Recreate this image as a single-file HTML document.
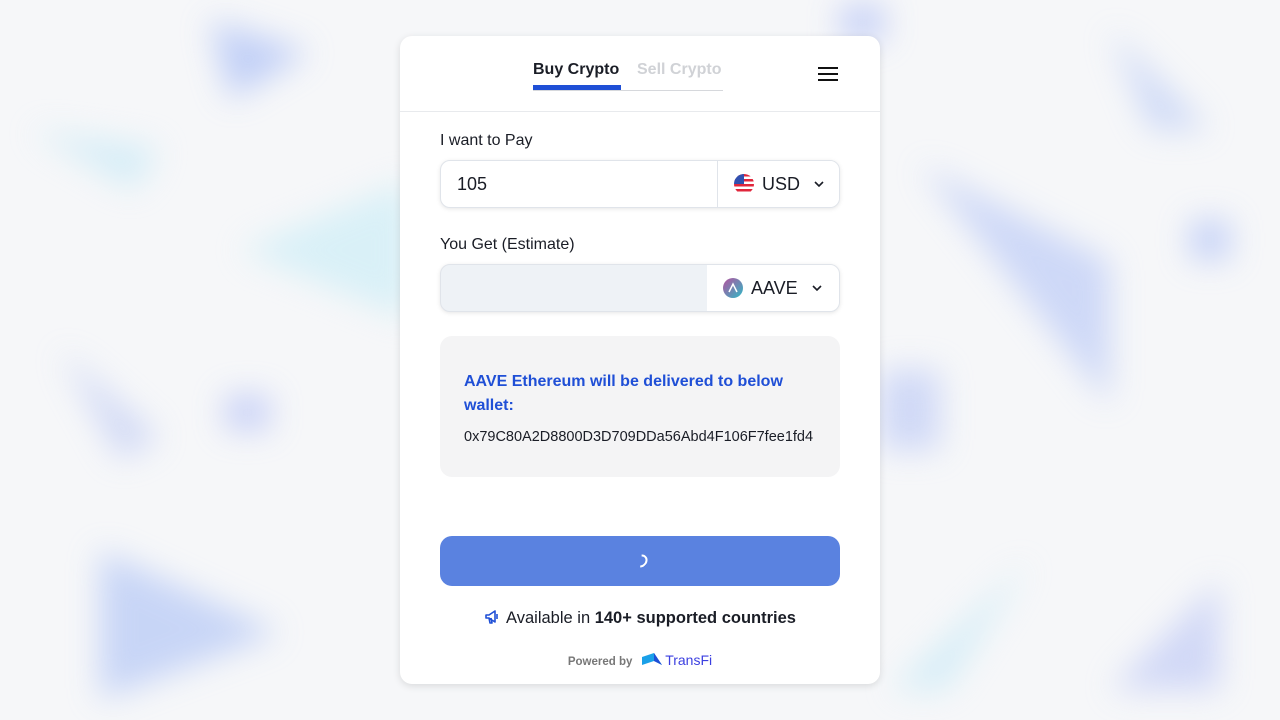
<!DOCTYPE html>
<html><head><style>
*{box-sizing:border-box;margin:0;padding:0}
body{width:1280px;height:720px;overflow:hidden;background:#f6f7f9;font-family:"Liberation Sans",sans-serif;position:relative}
.b{position:absolute;filter:blur(16px);opacity:.6}
.b>div{width:100%;height:100%}
.card{position:absolute;left:400px;top:36px;width:480px;height:648px;background:#fff;border-radius:12px;box-shadow:0 2px 8px rgba(0,0,0,.12)}
.hdr{height:76px;border-bottom:1px solid #e8eaed;position:relative}
.tab{position:absolute;top:25px;font-size:16px;font-weight:bold}
.lbl{position:absolute;left:40px;font-size:16px;color:#1a1d26}
.box{position:absolute;left:40px;width:400px;height:48px;border-radius:10px;border:1px solid #e0e4ea;box-shadow:0 1px 4px rgba(0,0,0,.1);overflow:hidden}
.sel{position:absolute;right:0;top:0;height:100%;background:#fff;display:flex;align-items:center;font-size:18px;color:#1a1d26}
</style></head><body>
<div class="b" style="left:210px;top:20px;width:100px;height:80px"><div style="background:#9fb6f5;clip-path:polygon(0 0,100% 40%,20% 100%)"></div></div>
<div class="b" style="left:30px;top:130px;width:130px;height:60px"><div style="background:#bfe6f5;clip-path:polygon(0 0,100% 30%,80% 100%)"></div></div>
<div class="b" style="left:240px;top:180px;width:170px;height:140px"><div style="background:#c6ecf6;clip-path:polygon(100% 0,0 50%,100% 100%)"></div></div>
<div class="b" style="left:60px;top:350px;width:100px;height:110px"><div style="background:#b9c6f3;clip-path:polygon(0 0,100% 80%,60% 100%)"></div></div>
<div class="b" style="left:225px;top:395px;width:45px;height:35px"><div style="background:#a9b7f5"></div></div>
<div class="b" style="left:100px;top:550px;width:180px;height:150px"><div style="background:#a9bff5;clip-path:polygon(0 0,100% 55%,0 100%)"></div></div>
<div class="b" style="left:920px;top:165px;width:190px;height:240px"><div style="background:#b3c4f6;clip-path:polygon(0 0,100% 40%,100% 100%)"></div></div>
<div class="b" style="left:880px;top:370px;width:60px;height:80px"><div style="background:#b7c5f5"></div></div>
<div class="b" style="left:1110px;top:30px;width:100px;height:100px"><div style="background:#b6c8f5;clip-path:polygon(0 0,100% 100%,40% 100%)"></div></div>
<div class="b" style="left:1190px;top:220px;width:40px;height:40px"><div style="background:#a5b9f5"></div></div>
<div class="b" style="left:890px;top:560px;width:140px;height:130px"><div style="background:#c1e7f6;clip-path:polygon(100% 0,0 100%,40% 100%)"></div></div>
<div class="b" style="left:1110px;top:580px;width:110px;height:110px"><div style="background:#b9c4f5;clip-path:polygon(100% 0,0 100%,100% 100%)"></div></div>
<div class="b" style="left:840px;top:5px;width:45px;height:35px"><div style="background:#a6b7f5"></div></div>
<div class="card">
<div class="hdr">
<div class="tab" style="left:133px;color:#1a1d26">Buy Crypto</div>
<div class="tab" style="left:237px;color:#d0d2d6">Sell Crypto</div>
<div style="position:absolute;left:133px;top:54px;width:190px;height:1px;background:#d6d8dc"></div>
<div style="position:absolute;left:133px;top:49px;width:88px;height:5px;background:#1f4fd6"></div>
<div style="position:absolute;left:418px;top:31px;width:20px;height:2px;background:#111;box-shadow:0 6px 0 #111,0 12px 0 #111"></div>
</div>
<div class="lbl" style="top:96px">I want to Pay</div>
<div class="box" style="top:124px;background:#fff">
<div style="position:absolute;left:16px;top:13px;font-size:18px;color:#1a1d26">105</div>
<div class="sel" style="width:122px;border-left:1px solid #e0e4ea;padding-left:16px">
<svg width="20" height="20" viewBox="0 0 20 20"><clipPath id="c"><circle cx="10" cy="10" r="10"/></clipPath><g clip-path="url(#c)"><rect width="20" height="20" fill="#fff"/><rect y="0" width="20" height="2.5" fill="#e0263b"/><rect y="5" width="20" height="2.5" fill="#e0263b"/><rect y="10" width="20" height="2.5" fill="#e0263b"/><rect y="15" width="20" height="2.5" fill="#e0263b"/><rect width="10" height="10" fill="#3050b0"/></g></svg>
<span style="margin-left:8px">USD</span><svg style="margin-left:14px" width="10" height="6" viewBox="0 0 10 6"><path d="M1 1l4 4 4-4" stroke="#1a1d26" stroke-width="1.6" fill="none"/></svg></div>
</div>
<div class="lbl" style="top:200px">You Get (Estimate)</div>
<div class="box" style="top:228px;background:#eef2f6">
<div class="sel" style="width:132px;padding-left:16px">
<svg width="20" height="20" viewBox="0 0 20 20"><defs><linearGradient id="g" x1="0" y1="0" x2="1" y2="1"><stop offset="0" stop-color="#b6509e"/><stop offset="1" stop-color="#2ebac6"/></linearGradient></defs><circle cx="10" cy="10" r="10" fill="url(#g)"/><path d="M6 14 L10 6 L14 14" stroke="#fff" stroke-width="1.5" fill="none"/></svg>
<span style="margin-left:8px">AAVE</span><svg style="margin-left:14px" width="10" height="6" viewBox="0 0 10 6"><path d="M1 1l4 4 4-4" stroke="#1a1d26" stroke-width="1.6" fill="none"/></svg></div>
</div>
<div style="position:absolute;left:40px;top:300px;width:400px;height:141px;background:#f4f4f5;border-radius:12px;padding:32px 24px 0">
<div style="color:#1f4fd6;font-weight:bold;font-size:16px;line-height:24px;width:340px;margin-top:2px">AAVE Ethereum will be delivered to below wallet:</div>
<div style="font-size:14.5px;color:#1a1d26;margin-top:11px;white-space:nowrap">0x79C80A2D8800D3D709DDa56Abd4F106F7fee1fd4</div>
</div>
<div style="position:absolute;left:40px;top:500px;width:400px;height:50px;background:#5a82e0;border-radius:12px">
<div style="position:absolute;left:195px;top:18px;width:12px;height:14px;border:2px solid #fff;border-left-color:transparent;border-bottom-color:transparent;border-radius:50%;transform:rotate(45deg)"></div>
</div>
<div style="position:absolute;left:0;width:480px;top:573px;text-align:center;font-size:16.5px;color:#1a1d26"><svg width="16" height="16" viewBox="0 0 16 16" style="vertical-align:-2px;margin-right:6px"><path d="M2 6h3l6-4v11l-6-4H2z M5 9l1 5h2l-1-5 M13 5v5" stroke="#1f4fd6" stroke-width="1.6" fill="none" stroke-linejoin="round"/></svg>Available in <b>140+ supported countries</b></div>
<div style="position:absolute;left:0;width:480px;top:616px;text-align:center;font-size:11.5px"><b style="color:#777">Powered by</b> &nbsp;&nbsp;<svg width="20" height="14" viewBox="0 0 20 14" style="vertical-align:-2px"><path d="M0 4 L12 0 L20 12 L12 8 L0 12Z" fill="#1aa0e8"/><path d="M12 0 L20 12 L12 8Z" fill="#1f4fd6"/></svg> <span style="color:#3b3fe0;font-size:14px">TransFi</span></div>
</div>
</body></html>
